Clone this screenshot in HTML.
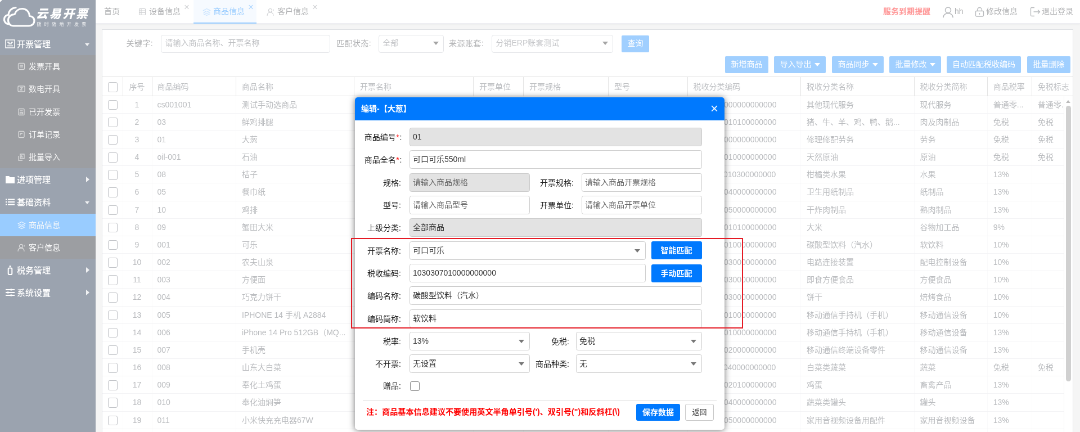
<!DOCTYPE html>
<html lang="zh-CN">
<head>
<meta charset="utf-8">
<title>云易开票 - 商品信息</title>
<style>
*{box-sizing:border-box;margin:0;padding:0}
html,body{width:1080px;height:432px;overflow:hidden;background:#fff}
body{font-family:"Liberation Sans","Noto Sans CJK SC",sans-serif;}
#app{will-change:transform;position:absolute;left:0;top:0;width:1920px;height:768px;transform:scale(.5625);transform-origin:0 0;font-size:14px;color:#606266;background:#ebebeb;overflow:hidden}
svg{display:block}
/* ---------- sidebar ---------- */
#side{position:absolute;left:0;top:0;width:170px;height:768px;background:#37475f;color:#fff}
#logo{position:absolute;left:0;top:0;width:170px;height:58px}
#logo svg{position:absolute;left:5px;top:10px}
#logo .t1{position:absolute;left:64px;top:10.5px;font-size:21px;font-weight:900;font-style:italic;letter-spacing:2.6px;line-height:28px;white-space:nowrap}
#logo .t2{position:absolute;left:65.5px;top:38.5px;font-size:8px;letter-spacing:5.3px;line-height:10px;white-space:nowrap;opacity:.9}
#menu{position:absolute;left:0;top:58px;width:170px}
.mi{height:40.2px;line-height:41.6px;position:relative;font-size:15px;padding-left:30px;white-space:nowrap;font-weight:500}
.mi svg.ic{position:absolute;left:9px;top:11px}
.mi .ar{position:absolute;right:11.5px;top:18.5px;width:0;height:0;border:4.5px solid transparent;border-top:5.5px solid rgba(255,255,255,.85);border-bottom:0}
.mi .ar.r{top:15px;right:11.5px;border:5px solid transparent;border-left:6px solid rgba(255,255,255,.85);border-right:0}
.si{height:40.2px;line-height:40.2px;position:relative;font-size:14px;padding-left:51px;background:#393d45;white-space:nowrap;color:#f4f4f4}
.si svg.ic{position:absolute;left:31px;top:13px}
.si.on{background:#3399ff}
/* ---------- top bar ---------- */
#top{position:absolute;left:170px;top:0;width:1750px;height:41.5px;background:#fff;border-bottom:1px solid #dcdfe6;box-shadow:0 1px 4px rgba(0,21,41,.12)}
#top .tab{position:absolute;top:0;height:41px;line-height:41px;font-size:14px;color:#606266;white-space:nowrap}
#top .tab svg{position:absolute;top:14px}
#top .x{position:absolute;top:-8.5px;font-size:17px;color:#a0a3a9;font-weight:300}
#top .tab.on{color:#3399ff}
#top .ul{position:absolute;left:174px;top:39.5px;width:112px;height:2px;background:#3399ff}
#top .r{position:absolute;top:0;height:41px;line-height:41px;font-size:14px;color:#606266;white-space:nowrap}
/* ---------- panel ---------- */
#panel{position:absolute;left:181px;top:52px;width:1727px;height:730px;background:#fff;border:1px solid #bfc2c9;overflow:hidden}
.lab{position:absolute;font-size:14px;color:#606266;white-space:nowrap;line-height:30.5px;text-align:right;letter-spacing:.4px;margin-left:-2px}
.inp{position:absolute;height:32px;border:1px solid #c6cad1;border-radius:4px;background:#fff;font-size:14px;line-height:27.5px;padding-left:6.5px;color:#606266;white-space:nowrap;overflow:hidden}
.inp.ph{color:#7b7e85}
.inp .dn{position:absolute;right:8px;top:11.5px;width:0;height:0;border:5.5px solid transparent;border-top:6.5px solid #4a4a4a;border-bottom:0}
.btn{position:absolute;height:30px;line-height:28px;background:#409eff;color:#fff;font-size:14px;text-align:center;border-radius:2px;white-space:nowrap}
.btn .tri{display:inline-block;width:0;height:0;border:5px solid transparent;border-top:6px solid #fff;border-bottom:0;margin-left:5px;vertical-align:1px}
/* ---------- table ---------- */
#tbl{position:absolute;left:0;top:83px;width:1745px;font-size:14px}
.th{height:34.5px;line-height:34px;display:flex;border-top:1px solid #c6c6c6;border-bottom:1px solid #c6c6c6;color:#7a7e85;background:#fff}
.tr{height:31.18px;line-height:30px;display:flex;border-bottom:1px solid #e6e7ea;background:#fff;color:#72767c}
.c{padding-left:10px;white-space:nowrap;overflow:hidden;flex:none;border-right:1px solid #c6c6c6;height:100%}
.tr .c{border-right-color:#f4f4f6}
.c0{width:37px;padding-left:9.5px;overflow:visible}.c1{width:52px;padding-left:0;padding-right:2px;text-align:center}.c2{width:149px;padding-left:8.5px}.c3{width:210px}.c4{width:212px}.c5{width:89px}.c6{width:151px}.c7{width:140.5px}.c8{width:201.5px}.c9{width:201.5px}.c10{width:130.3px}.c11{width:79px}.c12{width:55px;border-right:0}
.th .c12{width:75px}
.tr{width:1710px;border-right:1px solid #e4e4e4}
.cb{display:inline-block;width:17.5px;height:17.5px;border:1.6px solid #83878f;border-radius:3px;background:#fff;vertical-align:-4.5px}
#sb{position:absolute;left:1712px;top:130px;width:9px;height:600px}
#sb b{position:absolute;left:.5px;top:-5.5px;width:0;height:0;border:4.5px solid transparent;border-bottom:5px solid #777;border-top:0}
#sb i{position:absolute;left:1px;top:5px;width:8.7px;height:490px;background:#a0a0a0;border-radius:4.3px}
/* ---------- mask ---------- */
#mask{position:absolute;left:0;top:0;width:1920px;height:768px;background:rgba(255,255,255,.5)}
/* ---------- modal ---------- */
#dlg{position:absolute;left:631px;top:173px;width:657px;height:591px;background:#fff;box-shadow:0 1px 12px rgba(0,0,0,.55);border-radius:5px;font-size:14px;color:#333}
#dlg .hd{position:absolute;left:0;top:0;width:657px;height:41.3px;background:#0079fe;color:#fff;font-weight:bold;font-size:14px;line-height:40.5px;padding-left:11px;border-radius:5px 5px 0 0}
#dlg .hd .cl{position:absolute;right:11px;top:0;font-weight:300;font-size:24px;line-height:39.5px;color:rgba(255,255,255,.92)}
.fl{position:absolute;width:80px;text-align:right;line-height:32px;font-size:14px;color:#1c1c1c;white-space:nowrap}
.fl b{color:#f00;font-weight:normal;padding:0 1px 0 .5px}
.fi{position:absolute;height:33px;margin-top:-.8px;border:1.1px solid #cecece;border-radius:3.5px;background:#fff;font-size:14px;line-height:31.4px;padding-left:5.5px;color:#333;white-space:nowrap;overflow:hidden}
.fi.g{background:#e3e3e3;border-color:#cbcbcb}
.fi.ph{color:#666}
.fi .dn{position:absolute;right:8.5px;top:13px;width:0;height:0;border:5px solid transparent;border-top:6px solid #777;border-bottom:0}
.fb{position:absolute;height:32px;line-height:32px;background:#0079fe;color:#fff;font-size:14px;text-align:center;border-radius:3px;font-weight:bold;white-space:nowrap}
#redbox{position:absolute;left:623.6px;top:422.8px;width:697.5px;height:161.6px;border:2.8px solid #e51a24}
</style>
</head>
<body>
<div id="app">

<!-- ================= sidebar ================= -->
<div id="side">
  <i style="position:absolute;left:0;top:0;width:0;height:0;border:2.5px solid transparent;border-top-color:#fff;border-left-color:#fff"></i>
  <div id="logo">
    <svg width="58" height="40" viewBox="0 0 58 40" fill="none" stroke="#fff" stroke-width="3.2" stroke-linecap="round" stroke-linejoin="round">
      <path d="M12 33 C4 33 2 27 2.5 23.5 C3 19 7 16.5 10 16.5 C10.5 9 16 4 23 3.5"/>
      <path d="M19 36 L46 36 C53 36 56 31 56 27 C56 21.5 51.5 18.5 47.5 18.5 C47 10 41 5.5 34.5 5.5 C28 5.5 23 9.5 21 15.5 C14 15.5 9.5 20 9.5 26 C9.5 32 13.5 36 19 36 Z"/>
    </svg>
    <div class="t1">云易开票</div>
    <div class="t2">随时随地开发票</div>
  </div>
  <div id="menu">
    <div class="mi"><svg class="ic" width="18" height="18" viewBox="0 0 18 18" fill="none" stroke="#fff" stroke-width="1.5"><rect x="1" y="2" width="16" height="14"/><path d="M4 6h3v3h4V6h3M4 12.5h10"/></svg>开票管理<i class="ar"></i></div>
    <div class="si"><svg class="ic" width="14" height="14" viewBox="0 0 14 14" fill="none" stroke="#e8e8e8" stroke-opacity=".7" stroke-width="1.3"><rect x="1.5" y="1.5" width="11" height="11" rx="2"/><path d="M4 5h6M4 8h6"/></svg>发票开具</div>
    <div class="si"><svg class="ic" width="14" height="14" viewBox="0 0 14 14" fill="none" stroke="#e8e8e8" stroke-opacity=".7" stroke-width="1.3"><rect x="1" y="2" width="12" height="10" rx="1.5"/><path d="M5 5h4l-4 4h4"/></svg>数电开具</div>
    <div class="si"><svg class="ic" width="14" height="14" viewBox="0 0 14 14" fill="none" stroke="#e8e8e8" stroke-opacity=".7" stroke-width="1.3"><rect x="2" y="1.5" width="10" height="11" rx="1"/><path d="M4.5 5h5M4.5 8h5v2.5h-5z"/></svg>已开发票</div>
    <div class="si"><svg class="ic" width="14" height="14" viewBox="0 0 14 14" fill="none" stroke="#e8e8e8" stroke-opacity=".7" stroke-width="1.3"><rect x="2" y="1.5" width="10" height="11" rx="1.5"/><path d="M5 5.5h4M5 5.5v3"/></svg>订单记录</div>
    <div class="si"><svg class="ic" width="14" height="14" viewBox="0 0 14 14" fill="none" stroke="#e8e8e8" stroke-opacity=".7" stroke-width="1.3"><path d="M5 2h7v8H5zM2 5v8h7M8 4l-2 3h4"/></svg>批量导入</div>
    <div class="mi"><svg class="ic" width="18" height="18" viewBox="0 0 18 18" fill="#fff"><path d="M1 3h6l2 2h8v11H1z"/></svg>进项管理<i class="ar r"></i></div>
    <div class="mi"><svg class="ic" width="18" height="18" viewBox="0 0 18 18" fill="#fff"><rect x="1" y="3.5" width="2.2" height="2.2"/><rect x="5" y="3.5" width="12" height="2.2"/><rect x="1" y="8" width="2.2" height="2.2"/><rect x="5" y="8" width="12" height="2.2"/><rect x="1" y="12.5" width="2.2" height="2.2"/><rect x="5" y="12.5" width="12" height="2.2"/></svg>基础资料<i class="ar"></i></div>
    <div class="si on"><svg class="ic" width="15" height="15" viewBox="0 0 15 15" fill="none" stroke="#d4e9ff" stroke-width="1.2"><path d="M7.5 1.5l6 3-6 3-6-3zM1.5 7.5l6 3 6-3M1.5 10.5l6 3 6-3"/></svg>商品信息</div>
    <div class="si"><svg class="ic" width="15" height="15" viewBox="0 0 15 15" fill="none" stroke="#e8e8e8" stroke-opacity=".7" stroke-width="1.3"><circle cx="6.5" cy="4.5" r="3"/><path d="M1 14c0-4 2.5-6 5.5-6s5.5 2 5.5 6M12 2.5v3"/></svg>客户信息</div>
    <div class="mi"><svg class="ic" width="18" height="18" viewBox="0 0 18 18" fill="none" stroke="#fff" stroke-width="2"><rect x="5.7" y="5.5" width="6.6" height="11.5" rx="1.8"/><path d="M7.6 2.6h2.800" stroke-width="2.800"/></svg>税务管理<i class="ar r"></i></div>
    <div class="mi"><svg class="ic" width="18" height="18" viewBox="0 0 18 18" fill="none" stroke="#fff" stroke-width="1.8"><path d="M1 4h16M1 9h16M1 14h16"/><path d="M11 2.5v3M5 7.5v3M11 12.5v3" stroke-width="3"/></svg>系统设置<i class="ar r"></i></div>
  </div>
</div>

<!-- ================= top bar ================= -->
<div id="top">
  <div style="position:absolute;left:174px;top:0;width:112px;height:40px;background:#ecf4ff"></div>
  <div class="tab" style="left:15px">首页</div>
  <div class="tab" style="left:95px"><svg style="left:-19px" width="14" height="14" viewBox="0 0 14 14" fill="none" stroke="#9a9da3" stroke-width="1.1"><rect x="1.5" y="1.5" width="11" height="11" rx="1"/><path d="M1.5 5h11M1.5 8.5h11M5 1.5v11"/></svg>设备信息<span class="x" style="left:62px">×</span></div>
  <div class="tab on" style="left:209px"><svg style="left:-19px" width="15" height="15" viewBox="0 0 15 15" fill="none" stroke="#8cc4ff" stroke-width="1.1"><path d="M7.5 1.5l6 3-6 3-6-3zM1.5 7.5l6 3 6-3M1.5 10.5l6 3 6-3"/></svg>商品信息<span class="x" style="left:62px;color:#59abff">×</span></div>
  <div class="ul"></div>
  <div class="tab" style="left:323px"><svg style="left:-19px" width="15" height="15" viewBox="0 0 15 15" fill="none" stroke="#9a9da3" stroke-width="1.1"><circle cx="6.5" cy="4.5" r="3"/><path d="M1 14c0-4 2.5-6 5.5-6s5.5 2 5.5 6M12 2.5v3"/></svg>客户信息<span class="x" style="left:62px">×</span></div>

  <div class="r" style="left:1400px;color:#ff2a2a;font-weight:bold">服务到期提醒</div>
  <svg style="position:absolute;left:1504.5px;top:10.5px" width="21" height="21" viewBox="0 0 18 18" fill="none" stroke="#70747a" stroke-width="1.3"><circle cx="9" cy="6" r="4.3"/><path d="M1.5 17.5c.5-4.5 3.5-6.5 7.5-6.5s7 2 7.5 6.500"/></svg>
  <div class="r" style="left:1527px">hh</div>
  <svg style="position:absolute;left:1563px;top:12px" width="17" height="18" viewBox="0 0 17 18" fill="none" stroke="#70747a" stroke-width="1.3"><rect x="1.5" y="7.5" width="14" height="9.500" rx="1.5"/><path d="M4.500 7.500v-2a4 4 0 018 0v2M8.500 11v3"/></svg>
  <div class="r" style="left:1583px">修改信息</div>
  <svg style="position:absolute;left:1661px;top:12px" width="19" height="18" viewBox="0 0 19 18" fill="none" stroke="#70747a" stroke-width="1.3"><path d="M8 1.500H3a1.500 1.500 0 00-1.500 1.500v12A1.500 1.500 0 003 16.500h5M6.500 9h11M14 5.500l3.500 3.500-3.500 3.500"/></svg>
  <div class="r" style="left:1682px">退出登录</div>
</div>

<!-- ================= panel ================= -->
<div id="panel">
  <div class="lab" style="left:20px;top:8.500px;width:72px">关键字:</div>
  <div class="inp ph" style="left:104px;top:8.500px;width:301px">请输入商品名称、开票名称</div>
  <div class="lab" style="left:408px;top:8.500px;width:72px">匹配状态:</div>
  <div class="inp" style="left:491px;top:8.500px;width:116px;color:#8a8d93">全部<i class="dn"></i></div>
  <div class="lab" style="left:608px;top:8.500px;width:72px">来源账套:</div>
  <div class="inp" style="left:692px;top:8.500px;width:216px;color:#8a8d93">分销ERP账套测试<i class="dn"></i></div>
  <div class="btn" style="left:923px;top:9.500px;width:49px">查询</div>

  <div class="btn" style="left:1107px;top:46.500px;width:77px">新增商品</div>
  <div class="btn" style="left:1194px;top:46.500px;width:92px">导入导出<i class="tri"></i></div>
  <div class="btn" style="left:1297px;top:46.500px;width:92px">商品同步<i class="tri"></i></div>
  <div class="btn" style="left:1399px;top:46.500px;width:92px">批量修改<i class="tri"></i></div>
  <div class="btn" style="left:1501px;top:46.500px;width:132px">自动匹配税收编码</div>
  <div class="btn" style="left:1644px;top:46.500px;width:77px">批量删除</div>

  <div id="tbl">
    <div class="th"><div class="c c0"><i class="cb"></i></div><div class="c c1">序号</div><div class="c c2">商品编码</div><div class="c c3">商品名称</div><div class="c c4">开票名称</div><div class="c c5">开票单位</div><div class="c c6">开票规格</div><div class="c c7">型号</div><div class="c c8">税收分类编码</div><div class="c c9">税收分类名称</div><div class="c c10">税收分类简称</div><div class="c c11">商品税率</div><div class="c c12">免税标志</div></div>
<div class="tr"><div class="c c0"><i class="cb"></i></div><div class="c c1">1</div><div class="c c2">cs001001</div><div class="c c3">测试手动选商品</div><div class="c c4"></div><div class="c c5"></div><div class="c c6"></div><div class="c c7"></div><div class="c c8">3049900000000000000</div><div class="c c9">其他现代服务</div><div class="c c10">现代服务</div><div class="c c11">普通零...</div><div class="c c12">普通零...</div></div>
<div class="tr"><div class="c c0"><i class="cb"></i></div><div class="c c1">2</div><div class="c c2">03</div><div class="c c3">鲜鸡排腿</div><div class="c c4"></div><div class="c c5"></div><div class="c c6"></div><div class="c c7"></div><div class="c c8">1030101010100000000</div><div class="c c9">猪、牛、羊、鸡、鸭、鹅...</div><div class="c c10">肉及肉制品</div><div class="c c11">免税</div><div class="c c12">免税</div></div>
<div class="tr"><div class="c c0"><i class="cb"></i></div><div class="c c1">3</div><div class="c c2">01</div><div class="c c3">大葱</div><div class="c c4"></div><div class="c c5"></div><div class="c c6"></div><div class="c c7"></div><div class="c c8">2020000000000000000</div><div class="c c9">修理修配劳务</div><div class="c c10">劳务</div><div class="c c11">免税</div><div class="c c12">免税</div></div>
<div class="tr"><div class="c c0"><i class="cb"></i></div><div class="c c1">4</div><div class="c c2">oil-001</div><div class="c c3">石油</div><div class="c c4"></div><div class="c c5"></div><div class="c c6"></div><div class="c c7"></div><div class="c c8">1020101010000000000</div><div class="c c9">天然原油</div><div class="c c10">原油</div><div class="c c11">免税</div><div class="c c12">免税</div></div>
<div class="tr"><div class="c c0"><i class="cb"></i></div><div class="c c1">5</div><div class="c c2">08</div><div class="c c3">桔子</div><div class="c c4"></div><div class="c c5"></div><div class="c c6"></div><div class="c c7"></div><div class="c c8">1010115010300000000</div><div class="c c9">柑橘类水果</div><div class="c c10">水果</div><div class="c c11">13%</div><div class="c c12"></div></div>
<div class="tr"><div class="c c0"><i class="cb"></i></div><div class="c c1">6</div><div class="c c2">05</div><div class="c c3">餐巾纸</div><div class="c c4"></div><div class="c c5"></div><div class="c c6"></div><div class="c c7"></div><div class="c c8">1060105040000000000</div><div class="c c9">卫生用纸制品</div><div class="c c10">纸制品</div><div class="c c11">13%</div><div class="c c12"></div></div>
<div class="tr"><div class="c c0"><i class="cb"></i></div><div class="c c1">7</div><div class="c c2">10</div><div class="c c3">鸡排</div><div class="c c4"></div><div class="c c5"></div><div class="c c6"></div><div class="c c7"></div><div class="c c8">1030107050000000000</div><div class="c c9">干炸肉制品</div><div class="c c10">熟肉制品</div><div class="c c11">13%</div><div class="c c12"></div></div>
<div class="tr"><div class="c c0"><i class="cb"></i></div><div class="c c1">8</div><div class="c c2">09</div><div class="c c3">蟹田大米</div><div class="c c4"></div><div class="c c5"></div><div class="c c6"></div><div class="c c7"></div><div class="c c8">1030102010100000000</div><div class="c c9">大米</div><div class="c c10">谷物加工品</div><div class="c c11">9%</div><div class="c c12"></div></div>
<div class="tr"><div class="c c0"><i class="cb"></i></div><div class="c c1">9</div><div class="c c2">001</div><div class="c c3">可乐</div><div class="c c4"></div><div class="c c5"></div><div class="c c6"></div><div class="c c7"></div><div class="c c8">1030307010000000000</div><div class="c c9">碳酸型饮料（汽水）</div><div class="c c10">软饮料</div><div class="c c11">10%</div><div class="c c12"></div></div>
<div class="tr"><div class="c c0"><i class="cb"></i></div><div class="c c1">10</div><div class="c c2">002</div><div class="c c3">农夫山泉</div><div class="c c4"></div><div class="c c5"></div><div class="c c6"></div><div class="c c7"></div><div class="c c8">1090407030000000000</div><div class="c c9">电路连接装置</div><div class="c c10">配电控制设备</div><div class="c c11">10%</div><div class="c c12"></div></div>
<div class="tr"><div class="c c0"><i class="cb"></i></div><div class="c c1">11</div><div class="c c2">003</div><div class="c c3">方便面</div><div class="c c4"></div><div class="c c5"></div><div class="c c6"></div><div class="c c7"></div><div class="c c8">1030206030000000000</div><div class="c c9">即食方便食品</div><div class="c c10">方便食品</div><div class="c c11">10%</div><div class="c c12"></div></div>
<div class="tr"><div class="c c0"><i class="cb"></i></div><div class="c c1">12</div><div class="c c2">004</div><div class="c c3">巧克力饼干</div><div class="c c4"></div><div class="c c5"></div><div class="c c6"></div><div class="c c7"></div><div class="c c8">1030201030000000000</div><div class="c c9">饼干</div><div class="c c10">焙烤食品</div><div class="c c11">10%</div><div class="c c12"></div></div>
<div class="tr"><div class="c c0"><i class="cb"></i></div><div class="c c1">13</div><div class="c c2">005</div><div class="c c3">IPHONE 14 手机 A2884</div><div class="c c4"></div><div class="c c5"></div><div class="c c6"></div><div class="c c7"></div><div class="c c8">1090513010000000000</div><div class="c c9">移动通信手持机（手机）</div><div class="c c10">移动通信设备</div><div class="c c11">10%</div><div class="c c12"></div></div>
<div class="tr"><div class="c c0"><i class="cb"></i></div><div class="c c1">14</div><div class="c c2">006</div><div class="c c3">iPhone 14 Pro 512GB（MQ...</div><div class="c c4"></div><div class="c c5"></div><div class="c c6"></div><div class="c c7"></div><div class="c c8">1090513010000000000</div><div class="c c9">移动通信手持机（手机）</div><div class="c c10">移动通信设备</div><div class="c c11">13%</div><div class="c c12"></div></div>
<div class="tr"><div class="c c0"><i class="cb"></i></div><div class="c c1">15</div><div class="c c2">007</div><div class="c c3">手机壳</div><div class="c c4"></div><div class="c c5"></div><div class="c c6"></div><div class="c c7"></div><div class="c c8">1090513020000000000</div><div class="c c9">移动通信终端设备零件</div><div class="c c10">移动通信设备</div><div class="c c11">13%</div><div class="c c12"></div></div>
<div class="tr"><div class="c c0"><i class="cb"></i></div><div class="c c1">16</div><div class="c c2">008</div><div class="c c3">山东大白菜</div><div class="c c4"></div><div class="c c5"></div><div class="c c6"></div><div class="c c7"></div><div class="c c8">1010112040000000000</div><div class="c c9">白菜类蔬菜</div><div class="c c10">蔬菜</div><div class="c c11">免税</div><div class="c c12">免税</div></div>
<div class="tr"><div class="c c0"><i class="cb"></i></div><div class="c c1">17</div><div class="c c2">009</div><div class="c c3">奉化土鸡蛋</div><div class="c c4"></div><div class="c c5"></div><div class="c c6"></div><div class="c c7"></div><div class="c c8">1010303020100000000</div><div class="c c9">鸡蛋</div><div class="c c10">畜禽产品</div><div class="c c11">13%</div><div class="c c12"></div></div>
<div class="tr"><div class="c c0"><i class="cb"></i></div><div class="c c1">18</div><div class="c c2">010</div><div class="c c3">奉化油焖笋</div><div class="c c4"></div><div class="c c5"></div><div class="c c6"></div><div class="c c7"></div><div class="c c8">1030205040000000000</div><div class="c c9">蔬菜类罐头</div><div class="c c10">罐头</div><div class="c c11">13%</div><div class="c c12"></div></div>
<div class="tr"><div class="c c0"><i class="cb"></i></div><div class="c c1">19</div><div class="c c2">011</div><div class="c c3">小米快充充电器67W</div><div class="c c4"></div><div class="c c5"></div><div class="c c6"></div><div class="c c7"></div><div class="c c8">1090522050000000000</div><div class="c c9">家用音视频设备用配件</div><div class="c c10">家用音视频设备</div><div class="c c11">13%</div><div class="c c12"></div></div>
<div class="tr"><div class="c c0"><i class="cb"></i></div><div class="c c1">20</div><div class="c c2">012</div><div class="c c3"></div><div class="c c4"></div><div class="c c5"></div><div class="c c6"></div><div class="c c7"></div><div class="c c8"></div><div class="c c9"></div><div class="c c10"></div><div class="c c11"></div><div class="c c12"></div></div>
  </div>
  <div id="sb"><b></b><i></i></div>
</div>

<!-- ================= mask ================= -->
<div id="mask"></div>

<!-- ================= dialog ================= -->
<div id="dlg">
  <div class="hd">编辑-【大葱】<span class="cl">×</span></div>

  <div class="fl" style="left:3.5px;top:54.500px">商品编号<b>*</b>:</div>
  <div class="fi g" style="left:96.500px;top:54.500px;width:520px">01</div>

  <div class="fl" style="left:3.5px;top:95px">商品全名<b>*</b>:</div>
  <div class="fi" style="left:96.500px;top:95px;width:520px">可口可乐550ml</div>

  <div class="fl" style="left:2px;top:135.500px">规格:</div>
  <div class="fi g ph" style="left:96.500px;top:135.500px;width:214px">请输入商品规格</div>
  <div class="fl" style="left:309px;top:135.500px">开票规格:</div>
  <div class="fi ph" style="left:402.500px;top:135.500px;width:214px">请输入商品开票规格</div>

  <div class="fl" style="left:2px;top:176px">型号:</div>
  <div class="fi ph" style="left:96.500px;top:176px;width:214px">请输入商品型号</div>
  <div class="fl" style="left:309px;top:176px">开票单位:</div>
  <div class="fi ph" style="left:402.500px;top:176px;width:214px">请输入商品开票单位</div>

  <div class="fl" style="left:2px;top:216px">上级分类:</div>
  <div class="fi g" style="left:96.500px;top:216px;width:520px">全部商品</div>

  <div class="fl" style="left:2px;top:256.500px">开票名称:</div>
  <div class="fi" style="left:96.500px;top:256.500px;width:420px">可口可乐<i class="dn"></i></div>
  <div class="fb" style="left:526.500px;top:256px;width:90px">智能匹配</div>

  <div class="fl" style="left:2px;top:297px">税收编码:</div>
  <div class="fi" style="left:96.500px;top:297px;width:420px">1030307010000000000</div>
  <div class="fb" style="left:526.500px;top:297px;width:90px">手动匹配</div>

  <div class="fl" style="left:2px;top:337px">编码名称:</div>
  <div class="fi" style="left:96.500px;top:337px;width:520px">碳酸型饮料（汽水）</div>

  <div class="fl" style="left:2px;top:377.500px">编码简称:</div>
  <div class="fi" style="left:96.500px;top:377.500px;width:520px">软饮料</div>

  <div class="fl" style="left:2px;top:417.500px">税率:</div>
  <div class="fi" style="left:96.500px;top:417.500px;width:214px">13%<i class="dn"></i></div>
  <div class="fl" style="left:301px;top:417.500px">免税:</div>
  <div class="fi" style="left:392.500px;top:417.500px;width:224px">免税<i class="dn"></i></div>

  <div class="fl" style="left:2px;top:458px">不开票:</div>
  <div class="fi" style="left:96.500px;top:458px;width:214px">无设置<i class="dn"></i></div>
  <div class="fl" style="left:301px;top:458px">商品种类:</div>
  <div class="fi" style="left:392.500px;top:458px;width:224px">无<i class="dn"></i></div>

  <div class="fl" style="left:2px;top:497px">赠品:</div>
  <i style="position:absolute;left:97.5px;top:504.5px;width:17px;height:17px;border:1.3px solid #858585;border-radius:3px;background:#fff"></i>

  <div style="position:absolute;left:14px;top:537.5px;width:629px;height:1.2px;background:#dcdcdc"></div>
  <div style="position:absolute;left:20px;top:544px;line-height:30px;font-size:14.1px;font-weight:bold;color:#f00;white-space:nowrap">注：商品基本信息建议不要使用英文半角单引号(')、双引号(")和反斜杠(\)</div>
  <div class="fb" style="left:500px;top:544.500px;width:78px;height:30px;line-height:30px">保存数据</div>
  <div style="position:absolute;left:587px;top:544.500px;width:51px;height:30px;line-height:28px;border:1px solid #c8c8c8;border-radius:3px;text-align:center;font-size:13px;color:#333;background:#fff">返回</div>
</div>

<div id="redbox"></div>

</div>
</body>
</html>
